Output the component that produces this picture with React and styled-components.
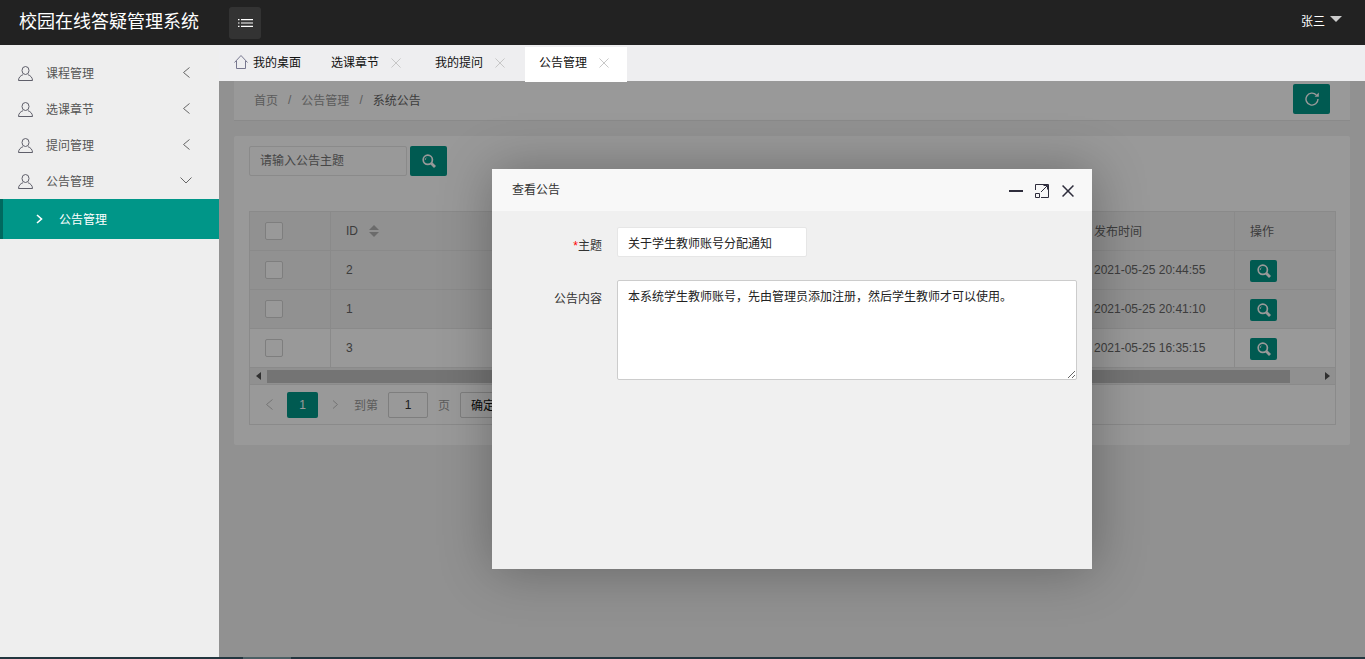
import React from "react";
import styled, { createGlobalStyle } from "styled-components";

const Global = createGlobalStyle`
  html, body { margin: 0; padding: 0; height: 100%; overflow: hidden; }
  body { font-family: "Liberation Sans", "Noto Sans CJK SC", sans-serif; font-size: 12px; color: #666; }
  * { box-sizing: border-box; }
`;

const Shell = styled.div`display: flex; flex-direction: column; height: 659px; background: #f2f2f2;`;
const TopBar = styled.header`flex: 0 0 45px; background: #222; display: flex; align-items: center; color: #fff;`;
const Brand = styled.div`width: 229px; padding-left: 19px; font-size: 18px; line-height: 45px; margin-top: -1px; white-space: nowrap;`;
const MenuToggle = styled.button`width: 32px; height: 32px; border: 0; border-radius: 3px; background: #333; padding: 0; display: flex; align-items: center; justify-content: center;`;
const UserMenu = styled.div`margin-left: auto; padding-right: 23px; display: flex; align-items: center; gap: 5px; font-size: 12px; margin-top: -5px;`;
const Caret = styled.span`width: 0; height: 0; border: 6px solid transparent; border-top-color: #ccc; border-bottom-width: 0; margin-top: -2px;`;

const Body = styled.div`flex: 1; min-height: 0; display: flex;`;
const Sidebar = styled.nav`flex: 0 0 219px; background: #eee; padding-top: 10px;`;
const NavItem = styled.div`height: 36px; display: flex; align-items: center; padding: 0 29px 0 18px; gap: 13px; color: #555;`;
const NavLabel = styled.span`flex: 1; margin-top: -2px;`;
const NavSub = styled.div`height: 40px; display: flex; align-items: center; background: #009688; border-left: 3px solid #00695f; padding-left: 33px; gap: 16px; color: #fff;`;
const NavSubLabel = styled.span`margin-top: -2px;`;

const Main = styled.main`flex: 1; min-width: 0; display: flex; flex-direction: column;`;
const TabBar = styled.div`flex: 0 0 36px; background: #eeeef0; display: flex; align-items: flex-end; position: relative; z-index: 2;`;
const Tab = styled.div`
  height: 35px; margin-bottom: -1px; display: flex; align-items: flex-start; line-height: 32px; color: #111;
  padding-left: ${p => (p.$home ? 15 : 14)}px; width: ${p => (p.$home ? 96 : 102)}px; margin-right: 2px;
  background: ${p => (p.$active ? "#fff" : "transparent")};
`;
const HomeIcon = styled.svg`flex: none; margin: 8px 5px 0 0;`;
const TabClose = styled.span`display: flex; margin: 11px 0 0 12px;`;

const Content = styled.div`flex: 1; min-height: 0; position: relative; padding: 0 15px; overflow: hidden;`;
const Crumbs = styled.div`height: 40px; background: #fff; border-bottom: 1px solid #e6e6e6; display: flex; align-items: center; padding: 0 20px 2px; color: #999; margin-bottom: 15px;`;
const Slash = styled.i`font-style: normal; margin: 0 10px; color: #999;`;
const CrumbNow = styled.span`color: #666;`;
const GreenButton = styled.button`width: 37px; height: 30px; border: 0; border-radius: 2px; background: #009688; padding: 0; display: flex; align-items: center; justify-content: center;`;
const RefreshButton = styled(GreenButton)`margin-left: auto; margin-bottom: 1px;`;
const Card = styled.section`background: #fff; border-radius: 2px; padding: 10px 14px 20px 15px;`;
const SearchRow = styled.div`display: flex; gap: 3px; margin-bottom: 35px;`;
const SearchInput = styled.input`
  width: 158px; height: 30px; border: 1px solid #e6e6e6; border-radius: 2px; padding: 0 10px; font: inherit; background: #fff; color: #333;
  &::placeholder { color: #757575; }
`;
const TableFrame = styled.div`border: 1px solid #e6e6e6;`;
const Row = styled.div`
  display: grid; grid-template-columns: 81px 1fr 156px 100px; height: 39px; border-bottom: 1px solid #e6e6e6;
  background: ${p => (p.$shaded ? "#f2f2f2" : "#fff")};
`;
const Cell = styled.div`
  display: flex; align-items: center; padding: 0 0 ${p => (p.$lift ? 2 : 0)}px 15px;
  border-right: ${p => (p.$last ? 0 : "1px solid #e6e6e6")}; white-space: nowrap;
`;
const Check = styled.span`width: 18px; height: 18px; border: 1px solid #d2d2d2; border-radius: 2px; background: #fff;`;
const Sort = styled.span`display: inline-flex; flex-direction: column; gap: 2px; margin-left: 11px;
  &::before, &::after { content: ""; width: 0; height: 0; border: 5px solid transparent; }
  &::before { border-bottom-color: #b2b2b2; border-top-width: 0; }
  &::after { border-top-color: #b2b2b2; border-bottom-width: 0; }
`;
const ViewButton = styled.button`width: 27px; height: 22px; border: 0; border-radius: 2px; background: #009688; padding: 0; display: flex; align-items: center; justify-content: center; margin-top: 2px;`;
const ScrollBar = styled.div`height: 17px; background: #f1f1f1; border-bottom: 1px solid #e6e6e6; display: flex; align-items: center; padding: 0 5px 0 6px;`;
const ScrollThumb = styled.div`flex: 1; height: 13px; background: #c1c1c1; margin: 0 35px 0 6px;`;
const ArrowL = styled.span`width: 0; height: 0; border: 4px solid transparent; border-right: 5px solid #505050; border-left-width: 0;`;
const ArrowR = styled.span`width: 0; height: 0; border: 4px solid transparent; border-left: 5px solid #505050; border-right-width: 0;`;
const Pager = styled.div`height: 39px; display: flex; align-items: center; padding-left: 16px; color: #999;`;
const PageNow = styled.span`width: 31px; height: 26px; border-radius: 2px; background: #009688; color: #fff; display: flex; align-items: center; justify-content: center; margin: 0 14px;`;
const PageInput = styled.span`width: 40px; height: 26px; border: 1px solid #d2d2d2; border-radius: 2px; display: flex; align-items: center; justify-content: center; color: #333; margin: 0 10px;`;
const PageGo = styled.span`height: 26px; border: 1px solid #d2d2d2; border-radius: 2px; padding: 0 10px; display: flex; align-items: center; color: #111; background: #fff; margin-left: 10px;`;
const PagerText = styled.span`margin-left: 15px;`;
const PagerUnit = styled.span``;

const Overlay = styled.div`position: absolute; inset: 0; background: rgba(0,0,0,.4); display: flex; align-items: center; justify-content: center;`;
const Modal = styled.div`width: 600px; height: 400px; background: #f0f0f0; box-shadow: 1px 1px 50px rgba(0,0,0,.3); display: flex; flex-direction: column;`;
const ModalHead = styled.div`flex: 0 0 42px; background: #f8f8f8; display: flex; align-items: center; padding: 0 18px 0 20px; color: #333;`;
const ModalTitle = styled.span`flex: 1; margin-top: -4px;`;
const ModalTools = styled.div`display: flex; align-items: center; margin-top: 2px;`;
const ModalBody = styled.form`padding: 16px 15px 0 0; display: flex; flex-direction: column; gap: 23px;`;
const FormRow = styled.div`display: flex; gap: 15px;`;
const FormLabel = styled.label`flex: 0 0 110px; text-align: right; color: #333; padding-top: 10px; line-height: 18px;`;
const Required = styled.span`color: #f00;`;
const TitleField = styled.input`width: 190px; height: 30px; border: 1px solid #e6e6e6; border-radius: 2px; background: #fff; padding: 0 10px; font: inherit; color: #222;`;
const ContentField = styled.textarea`flex: 1; height: 100px; display: block; border: 1px solid #ccc; border-radius: 2px; background: #fff; padding: 6px 10px; font: inherit; line-height: 20px; color: #222; resize: vertical; outline: none;`;

const BottomStrip = styled.div`flex: 0 0 2px; background: #23363f; padding-left: 243px;`;
const StripThumb = styled.div`width: 48px; height: 2px; background: #4c5f64;`;

const UserIcon = () => (
  <svg width="15" height="15" viewBox="0 0 15 15" fill="none" stroke="#5f5f6a" strokeWidth="1">
    <ellipse cx="7.5" cy="4.5" rx="3.5" ry="4" />
    <path d="M5 8.7C2.5 9.6.5 11.5.5 14.5h14c0-3-2-4.900-4.500-5.800" />
  </svg>
);
const ChevL = ({ color = "#666", mt = -2 }) => (
  <svg width="7" height="11" viewBox="0 0 7 11" fill="none" stroke={color} strokeWidth="1" style={{ marginTop: mt, flex: "none" }}><path d="M6.500.5l-6 5 6 5" /></svg>
);
const ChevD = () => (
  <svg width="12" height="7" viewBox="0 0 12 7" fill="none" stroke="#666" strokeWidth="1" style={{ marginLeft: -4, marginRight: -2, marginTop: -2 }}><path d="M.5.5l5.500 5.500 5.500-5.500" /></svg>
);
const ChevR = ({ color = "#fff", w = 7, h = 10, sw = 1.6 }) => (
  <svg width={w} height={h} viewBox="0 0 7 10" fill="none" stroke={color} strokeWidth={sw} style={{ flex: "none" }}><path d="M1 1l4.500 4-4.500 4" /></svg>
);
const SearchIcon = ({ s = 14 }) => (
  <svg width={s} height={s} viewBox="0 0 14 14" fill="none" stroke="#fff">
    <circle cx="5.800" cy="5.800" r="4.600" strokeWidth="1.700" />
    <path d="M9.300 9.300L13 13" strokeWidth="2.800" />
    <path d="M3.300 5.800a2.500 2.500 0 0 1 1.200-2.100" strokeWidth="1" />
  </svg>
);
const X = ({ s = 10, color = "#c2c2c2", sw = 1 }) => (
  <svg width={s} height={s} viewBox="0 0 11 11" fill="none" stroke={color} strokeWidth={sw}><path d="M.5.5l10 10M10.500.5l-10 10" /></svg>
);

const tabs = ["选课章节", "我的提问", "公告管理"];
const rows = [
  ["2", "2021-05-25 20:44:55", true],
  ["1", "2021-05-25 20:41:10", true],
  ["3", "2021-05-25 16:35:15", false],
];
const navs = ["课程管理", "选课章节", "提问管理"];

export default function App() {
  return (
    <Shell>
      <Global />
      <TopBar>
        <Brand>校园在线答疑管理系统</Brand>
        <MenuToggle aria-label="菜单">
          <svg width="15" height="8" viewBox="0 0 15 8" stroke="#fff" strokeWidth="1.200">
            <path d="M0 .6h1.500M3 .6h12M0 4h1.500M3 4h12M0 7.400h1.500M3 7.400h12" />
          </svg>
        </MenuToggle>
        <UserMenu>张三<Caret /></UserMenu>
      </TopBar>
      <Body>
        <Sidebar>
          {navs.map(n => (
            <NavItem key={n}><UserIcon /><NavLabel>{n}</NavLabel><ChevL /></NavItem>
          ))}
          <NavItem><UserIcon /><NavLabel>公告管理</NavLabel><ChevD /></NavItem>
          <NavSub><ChevR /><NavSubLabel>公告管理</NavSubLabel></NavSub>
        </Sidebar>
        <Main>
          <TabBar>
            <Tab $home>
              <HomeIcon width="14" height="14" viewBox="0 0 14 14" fill="none" stroke="#77778f" strokeWidth="1">
                <path d="M.5 7.500L7 .5l6.500 7M2.500 6v7.500h9V6" />
              </HomeIcon>
              我的桌面
            </Tab>
            {tabs.map((t, i) => (
              <Tab key={t} $active={i === 2}>
                {t}
                <TabClose><X /></TabClose>
              </Tab>
            ))}
          </TabBar>
          <Content>
            <Crumbs>
              <span>首页</span><Slash>/</Slash><span>公告管理</span><Slash>/</Slash><CrumbNow>系统公告</CrumbNow>
              <RefreshButton aria-label="刷新">
                <svg width="14" height="14" viewBox="0 0 14 14" fill="none" stroke="#fff" strokeWidth="1.400">
                  <path d="M11.300 2.900A6 6 0 1 0 13 7" />
                  <path d="M13.800.6v4.200H9.600z" fill="#fff" stroke="none" />
                </svg>
              </RefreshButton>
            </Crumbs>
            <Card>
              <SearchRow>
                <SearchInput placeholder="请输入公告主题" />
                <GreenButton aria-label="搜索"><SearchIcon /></GreenButton>
              </SearchRow>
              <TableFrame>
                <Row $shaded>
                  <Cell><Check /></Cell>
                  <Cell>ID<Sort /></Cell>
                  <Cell $lift>发布时间</Cell>
                  <Cell $last $lift>操作</Cell>
                </Row>
                {rows.map(([id, time, shaded]) => (
                  <Row key={id} $shaded={shaded}>
                    <Cell><Check /></Cell>
                    <Cell>{id}</Cell>
                    <Cell>{time}</Cell>
                    <Cell $last><ViewButton aria-label="查看"><SearchIcon /></ViewButton></Cell>
                  </Row>
                ))}
                <ScrollBar><ArrowL /><ScrollThumb /><ArrowR /></ScrollBar>
                <Pager>
                  <ChevL color="#c2c2c2" mt={0} />
                  <PageNow>1</PageNow>
                  <ChevR color="#c2c2c2" h={11} sw={1} />
                  <PagerText>到第</PagerText>
                  <PageInput>1</PageInput>
                  <PagerUnit>页</PagerUnit>
                  <PageGo>确定</PageGo>
                </Pager>
              </TableFrame>
            </Card>
            <Overlay>
              <Modal>
                <ModalHead>
                  <ModalTitle>查看公告</ModalTitle>
                  <ModalTools>
                    <svg width="14" height="14" viewBox="0 0 14 14" style={{ marginRight: 12 }}><rect x="0" y="6" width="14" height="2" fill="#2e2d3c" /></svg>
                    <svg width="14" height="14" viewBox="0 0 14 14" fill="none" stroke="#2e2d3c" strokeWidth="1" style={{ marginRight: 13 }}>
                      <path d="M.5 6V.5h13v13H6M.5 9.500h4v4h-4zM6 8l6.500-6.500M8.500 1.500h4v4" />
                    </svg>
                    <X s={12} color="#2e2d3c" sw={1.400} />
                  </ModalTools>
                </ModalHead>
                <ModalBody>
                  <FormRow>
                    <FormLabel><Required>*</Required>主题</FormLabel>
                    <TitleField defaultValue="关于学生教师账号分配通知" />
                  </FormRow>
                  <FormRow>
                    <FormLabel>公告内容</FormLabel>
                    <ContentField defaultValue="本系统学生教师账号，先由管理员添加注册，然后学生教师才可以使用。" />
                  </FormRow>
                </ModalBody>
              </Modal>
            </Overlay>
          </Content>
        </Main>
      </Body>
      <BottomStrip><StripThumb /></BottomStrip>
    </Shell>
  );
}
